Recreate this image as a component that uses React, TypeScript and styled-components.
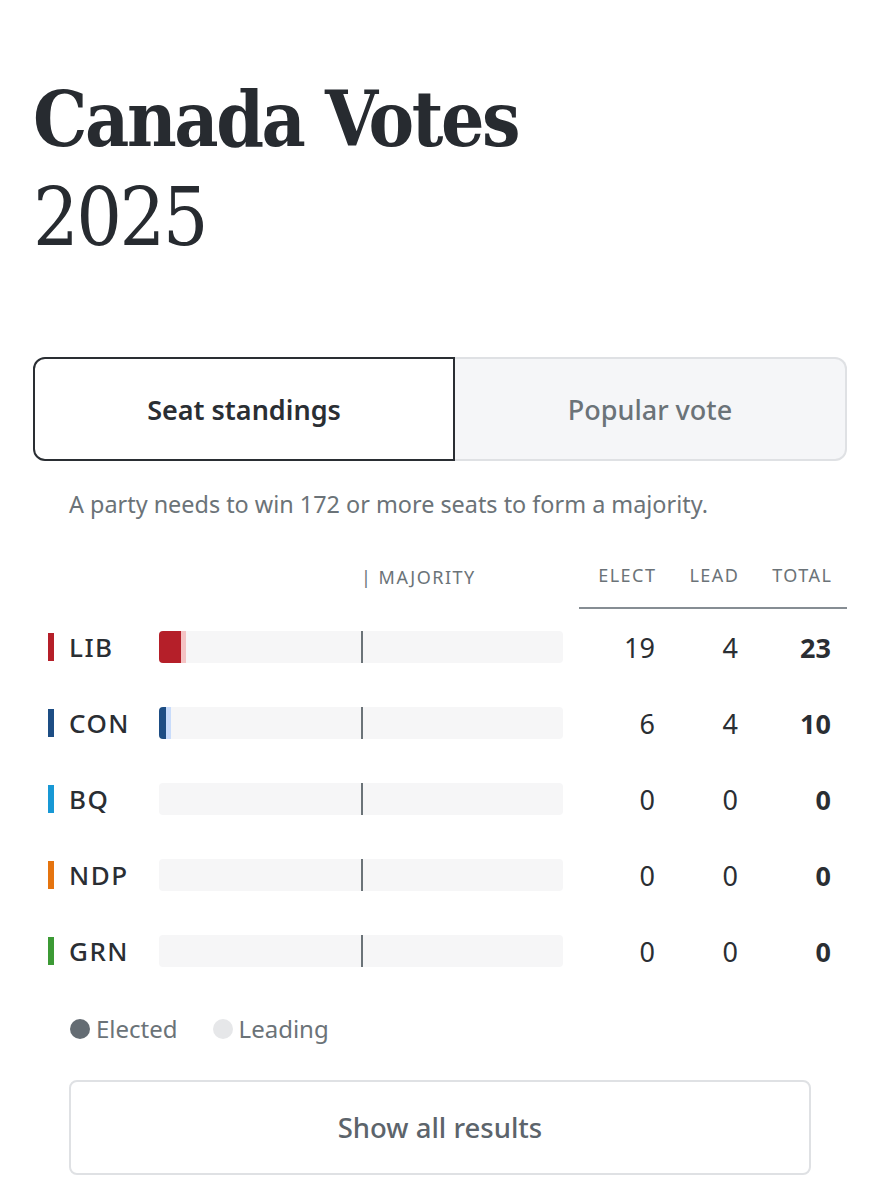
import React, { useState } from "react";
import styled, { createGlobalStyle } from "styled-components";

const TOTAL_SEATS = 343;
const MAJORITY = 172;

interface Party {
  code: string;
  color: string;
  lead: string;
  elected: number;
  leading: number;
}

const parties: Party[] = [
  { code: "LIB", color: "#b51f29", lead: "#f4c3c4", elected: 19, leading: 4 },
  { code: "CON", color: "#1d4d84", lead: "#c9dcfb", elected: 6, leading: 4 },
  { code: "BQ", color: "#1898d5", lead: "#c4e6f7", elected: 0, leading: 0 },
  { code: "NDP", color: "#e5740f", lead: "#fbd9bb", elected: 0, leading: 0 },
  { code: "GRN", color: "#3c9a35", lead: "#cfeacc", elected: 0, leading: 0 },
];

const GlobalStyle = createGlobalStyle`
  body {
    margin: 0;
    background: #ffffff;
    font-family: "Noto Sans", "Open Sans", sans-serif;
    color: #2a2e33;
  }
`;

const Page = styled.div`
  padding: 72px 32px 24px 33px;
`;

const Title = styled.h1`
  margin: 0;
  font-family: "DejaVu Serif", "Liberation Serif", serif;
  font-stretch: condensed;
  font-weight: 700;
  font-size: 76px;
  line-height: 96px;
  letter-spacing: -2.4px;
  color: #272b30;
`;

const Year = styled.div`
  font-family: "DejaVu Serif", "Liberation Serif", serif;
  font-stretch: condensed;
  font-weight: 300;
  font-size: 80px;
  line-height: 100px;
  letter-spacing: -2.5px;
  color: #272b30;
`;

const Tabs = styled.div`
  display: flex;
  margin-top: 89px;
  height: 104px;
`;

const Tab = styled.button<{ $active: boolean; $side: "left" | "right" }>`
  flex: ${(p) => (p.$side === "left" ? "0 0 422px" : "1")};
  display: flex;
  align-items: center;
  justify-content: center;
  font-family: "Noto Sans", sans-serif;
  font-size: 27px;
  font-weight: ${(p) => (p.$active ? 600 : 500)};
  cursor: pointer;
  color: ${(p) => (p.$active ? "#2a2e33" : "#6b7378")};
  background: ${(p) => (p.$active ? "#ffffff" : "#f5f6f8")};
  border: ${(p) => (p.$active ? "2px solid #2a2e33" : "2px solid #dfe1e4")};
  border-left-width: ${(p) => (!p.$active && p.$side === "right" ? "0" : "2px")};
  border-radius: ${(p) => (p.$side === "left" ? "12px 0 0 12px" : "0 12px 12px 0")};
`;

const Note = styled.p`
  margin: 28px 0 0 36px;
  font-size: 23.4px;
  line-height: 30px;
  color: #6b7378;
`;

const Table = styled.div`
  margin-top: 44px;
  padding: 0 16px 0 15px;
`;

const GRID = "111px 404px 92px 83px 93px";

const HeadRow = styled.div`
  display: grid;
  grid-template-columns: ${GRID};
  align-items: end;
  font-size: 18px;
  line-height: 24px;
  letter-spacing: 1.5px;
  color: #6b7378;
`;

const MajorityLabel = styled.div`
  grid-column: 2;
  padding-left: 202px;
  padding-bottom: 20px;
  white-space: nowrap;
`;

const NumHeads = styled.div`
  grid-column: 3 / span 3;
  display: grid;
  grid-template-columns: 76px 83px 93px;
  margin: 0 -16px 0 16px;
  padding: 0 16px 20px 0;
  border-bottom: 2px solid #868d93;
`;

const NumHead = styled.div`
  text-align: right;
  margin-right: -1.5px;
`;

const Row = styled.div`
  display: grid;
  grid-template-columns: ${GRID};
  align-items: center;
  height: 76px;
`;

const PartyName = styled.div<{ $color: string }>`
  display: flex;
  align-items: center;
  gap: 15px;
  font-size: 26px;
  font-weight: 500;
  letter-spacing: 1.5px;
  color: #2a2e33;

  &::before {
    content: "";
    width: 6px;
    height: 28px;
    background: ${(p) => p.$color};
  }
`;

const Track = styled.div`
  position: relative;
  display: flex;
  height: 32px;
  border-radius: 4px;
  background: #f6f6f7;
  overflow: hidden;
`;

const Fill = styled.div<{ $color: string }>`
  height: 100%;
  background: ${(p) => p.$color};
`;

const MajorityMark = styled.div`
  position: absolute;
  top: 0;
  bottom: 0;
  left: 202px;
  width: 2px;
  background: #6b7378;
`;

const Num = styled.div<{ $bold?: boolean }>`
  text-align: right;
  font-size: 27px;
  font-weight: ${(p) => (p.$bold ? 700 : 400)};
  color: #2a2e33;
`;

const Legend = styled.div`
  display: flex;
  gap: 35px;
  margin: 25px 0 0 37px;
  font-size: 24px;
  line-height: 30px;
  color: #6b7378;
`;

const LegendItem = styled.div<{ $dot: string }>`
  display: flex;
  align-items: center;
  gap: 6px;

  &::before {
    content: "";
    width: 20px;
    height: 20px;
    border-radius: 50%;
    background: ${(p) => p.$dot};
  }
`;

const ShowAll = styled.button`
  display: block;
  width: calc(100% - 72px);
  margin: 36px 36px 0;
  height: 95px;
  background: #ffffff;
  border: 2px solid #dfe1e4;
  border-radius: 8px;
  font-family: "Noto Sans", sans-serif;
  font-size: 27.5px;
  font-weight: 500;
  color: #5c646b;
  cursor: pointer;
`;

const pct = (n: number) => `${(n / TOTAL_SEATS) * 100}%`;

export default function App() {
  const [tab, setTab] = useState<"seats" | "vote">("seats");

  return (
    <Page>
      <GlobalStyle />
      <Title>Canada Votes</Title>
      <Year>2025</Year>

      <Tabs>
        <Tab $side="left" $active={tab === "seats"} onClick={() => setTab("seats")}>
          Seat standings
        </Tab>
        <Tab $side="right" $active={tab === "vote"} onClick={() => setTab("vote")}>
          Popular vote
        </Tab>
      </Tabs>

      <Note>A party needs to win {MAJORITY} or more seats to form a majority.</Note>

      <Table>
        <HeadRow>
          <MajorityLabel>| MAJORITY</MajorityLabel>
          <NumHeads>
            <NumHead>ELECT</NumHead>
            <NumHead>LEAD</NumHead>
            <NumHead>TOTAL</NumHead>
          </NumHeads>
        </HeadRow>

        {parties.map((p) => (
          <Row key={p.code}>
            <PartyName $color={p.color}>{p.code}</PartyName>
            <Track>
              <Fill $color={p.color} style={{ width: pct(p.elected) }} />
              <Fill $color={p.lead} style={{ width: pct(p.leading) }} />
              <MajorityMark />
            </Track>
            <Num>{p.elected}</Num>
            <Num>{p.leading}</Num>
            <Num $bold>{p.elected + p.leading}</Num>
          </Row>
        ))}
      </Table>

      <Legend>
        <LegendItem $dot="#646c73">Elected</LegendItem>
        <LegendItem $dot="#e6e7e9">Leading</LegendItem>
      </Legend>

      <ShowAll>Show all results</ShowAll>
    </Page>
  );
}
